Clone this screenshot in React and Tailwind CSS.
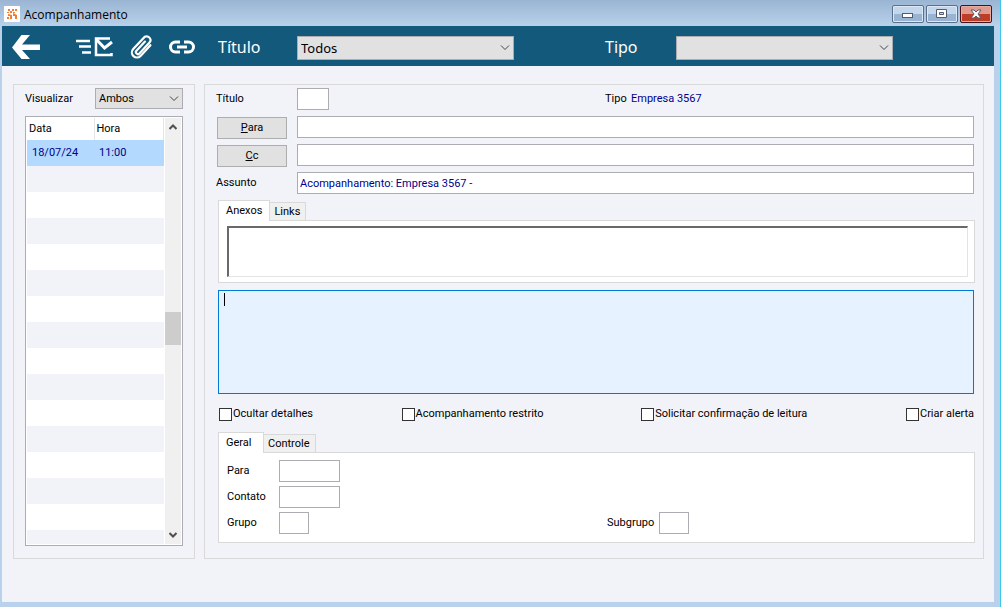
import { useState } from "react";

const fieldClass = "h-[22px] border border-[#abadb3] bg-white px-[2px] text-[#00008b] outline-none";

const BackIcon = () => (
  <svg width="28" height="24" viewBox="0 0 28 24" fill="#fff">
    <path d="M0 12.500 9.500 0H18l-8 9.500h18v5.500H10L18 24H9.500z" />
  </svg>
);

const SendIcon = () => (
  <svg width="38" height="20" viewBox="0 0 38 20" fill="none" stroke="#fff">
    <path d="M1 4h14M4 9.500h12M7 15.500h9" strokeWidth="2.500" />
    <path d="M35 1.500H21V18h15.500v-2" strokeWidth="2.500" />
    <path d="m21 2 8.500 9L37 5" strokeWidth="3" />
  </svg>
);

const ClipIcon = () => (
  <svg width="26" height="26" viewBox="-13 -13 26 26" fill="none" stroke="#fff" strokeWidth="2.200" strokeLinecap="round">
    <path transform="rotate(43)" d="M5-7V7.500a5 5 0 0 1-10 0V-9.500a4.200 4.200 0 0 1 6.500-1.500q1 1 1 3V6.500a2 2 0 0 1-4 0V-6" />
  </svg>
);

const LinkIcon = () => (
  <svg width="26" height="14" viewBox="0 0 26 14" fill="none" stroke="#fff" strokeWidth="3">
    <path d="M11 2H6.500a5 5 0 0 0 0 10H11M15 2h4.500a5 5 0 0 1 0 10H15M8 7h10" />
  </svg>
);

const Chevron = () => (
  <svg className="pointer-events-none absolute top-1/2 right-1 -translate-y-1/2" width="10" height="6" viewBox="0 0 10 6" fill="none" stroke="#444">
    <path d="m1 .500 4 4 4-4" />
  </svg>
);

const Select = ({ id, options, className }) => (
  <div className={`relative ${className}`}>
    <select
      id={id}
      className="h-full w-full appearance-none border border-[#abadb3] bg-[#e1e1e1] pl-[3px] text-black outline-none"
    >
      {options.map((o) => (
        <option key={o}>{o}</option>
      ))}
    </select>
    <Chevron />
  </div>
);

const Tabs = ({ tabs, active, onChange }) => (
  <div className="flex items-end">
    {tabs.map((t) => (
      <button
        key={t}
        type="button"
        onClick={() => onChange(t)}
        className={
          t === active
            ? "-mb-px h-[21px] min-w-[46px] border border-b-0 border-[#d9d9d9] bg-white px-[7px] text-left"
            : "h-[18px] border border-b-0 border-l-0 border-[#d9d9d9] bg-[#f0f0f0] pr-[5px] pl-1"
        }
      >
        {t}
      </button>
    ))}
  </div>
);

const Check = ({ label }) => (
  <label className="flex items-center gap-px whitespace-nowrap">
    <input type="checkbox" className="size-[13px] shrink-0 appearance-none border border-[#333] bg-white checked:bg-[#0078d7]" />
    {label}
  </label>
);

const TitleBar = () => (
  <header className="flex h-[26px] items-start bg-linear-to-b from-[#9ab5d3] to-[#b9d1ea] pr-2 pl-1">
    <svg className="mt-[6px]" width="16" height="16" viewBox="0 0 16 16">
      <rect width="16" height="16" rx="1" fill="#fff" />
      <path d="M4 3h2v2H4zM8 3h2v2H8zM11 3h2v2h-2zM3 6h2v1H3zM6 5h2v2H6zM9 6h2v1H9zM4 8l4 1v4H6v-3H4zM9 7l4 2v4h-2v-3H9zM3 11h2v2H3z" fill="#ef7d35" />
    </svg>
    <h1 className="mt-[7px] ml-1 font-['Open_Sans',sans-serif] text-[12px] leading-4">Acompanhamento</h1>
    <div className="mt-[5px] ml-auto flex gap-[2px]">
      <button type="button" aria-label="Minimizar" className="flex h-[18px] w-8 items-center justify-center rounded-[2px] border border-[#5b6f8d] bg-linear-to-b from-[#c3d7ec] from-50% to-[#98b4d2] to-50% shadow-[inset_0_0_0_1px_#dce8f5]">
        <svg className="mt-1" width="12" height="6"><rect x=".5" y=".5" width="10" height="4" fill="#fff" stroke="#555b6e" /></svg>
      </button>
      <button type="button" aria-label="Maximizar" className="flex h-[18px] w-8 items-center justify-center rounded-[2px] border border-[#5b6f8d] bg-linear-to-b from-[#c3d7ec] from-50% to-[#98b4d2] to-50% shadow-[inset_0_0_0_1px_#dce8f5]">
        <svg width="12" height="10"><path d="M.5.5h10v8H.5zM3.500 3.500v2h4v-2z" fill="#fff" fillRule="evenodd" stroke="#555b6e" /></svg>
      </button>
      <button type="button" aria-label="Fechar" className="flex h-[18px] w-8 items-center justify-center rounded-[2px] border border-[#43131c] bg-linear-to-b from-[#e09a90] from-50% to-[#bd3d27] to-50% shadow-[inset_0_0_0_1px_#e8aba0]">
        <svg width="12" height="10" viewBox="0 0 12 10"><path d="M1 1h3l2 2 2-2h3L8 5l3 4H8L6 7 4 9H1l3-4z" fill="#fff" stroke="#555b6e" /></svg>
      </button>
    </div>
  </header>
);

const Toolbar = () => (
  <div className="flex h-10 items-center bg-[#13597b] pt-[2px] pl-[10px] text-white">
    <button type="button" aria-label="Voltar"><BackIcon /></button>
    <button type="button" aria-label="Enviar" className="ml-[35px]"><SendIcon /></button>
    <button type="button" aria-label="Anexar" className="ml-4"><ClipIcon /></button>
    <button type="button" aria-label="Link" className="ml-[14px]"><LinkIcon /></button>
    <label htmlFor="filtro-titulo" className="ml-[23px] w-[79px] text-[16px]">Título</label>
    <Select id="filtro-titulo" options={["Todos"]} className="mt-[2px] h-6 w-[217px] text-[13px]" />
    <label htmlFor="filtro-tipo" className="ml-[91px] w-[71px] text-[16px]">Tipo</label>
    <Select id="filtro-tipo" options={[""]} className="mt-[2px] h-6 w-[217px] text-[13px]" />
  </div>
);

const rows = [{ data: "18/07/24", hora: "11:00" }, ...Array(15).fill({ data: "", hora: "" })];

const History = () => (
  <section className="flex w-[182px] flex-col border border-[#d9d9d9] px-[11px] pt-[3px] pb-3 font-[Roboto,sans-serif]">
    <div className="flex items-center justify-between">
      <label htmlFor="visualizar">Visualizar</label>
      <Select id="visualizar" options={["Ambos"]} className="h-[21px] w-[88px]" />
    </div>
    <div className="mt-[7px] flex h-[430px] border border-[#abadb3] bg-white p-px">
      <div className="flex-1 overflow-hidden">
        <table className="w-full table-fixed border-collapse">
          <thead>
            <tr className="h-[22px] text-left">
              <th className="w-[67px] border-r border-[#e5e5e5] pl-[2px] font-normal">Data</th>
              <th className="border-r border-[#e5e5e5] pl-[2px] font-normal">Hora</th>
            </tr>
          </thead>
          <tbody className="text-[#00008b]">
            {rows.map((r, i) => (
              <tr key={i} className={i === 0 ? "h-[26px] bg-[#b3d9ff]" : "h-[26px] odd:bg-white even:bg-[#f2f3f9]"}>
                <td className="pl-[5px]">{r.data}</td>
                <td className="pl-[5px]">{r.hora}</td>
              </tr>
            ))}
          </tbody>
        </table>
      </div>
      <div className="ml-px flex w-4 flex-col items-center bg-[#f0f0f0] py-[6px]">
        <svg width="8" height="6" viewBox="0 0 8 6" fill="none" stroke="#505050" strokeWidth="2"><path d="m.5 5 3.500-3.500L7.500 5" /></svg>
        <div className="mt-[182px] h-[33px] w-full bg-[#cdcdcd]" />
        <svg className="mt-auto" width="8" height="6" viewBox="0 0 8 6" fill="none" stroke="#505050" strokeWidth="2"><path d="M.5 1 4 4.500 7.500 1" /></svg>
      </div>
    </div>
  </section>
);

const Details = () => {
  const [assunto, setAssunto] = useState("Acompanhamento: Empresa 3567 -");
  const [mensagem, setMensagem] = useState("");
  const [tab, setTab] = useState("Anexos");
  const [tabInfo, setTabInfo] = useState("Geral");

  return (
    <section className="flex-1 border border-[#d9d9d9] pt-[3px] pr-[8px] pb-[15px] pl-[11px] font-[Roboto,sans-serif]">
      <div className="grid auto-rows-[22px] grid-cols-[81px_1fr] items-center gap-y-[6px] pr-px">
        <label htmlFor="titulo">Título</label>
        <div className="flex items-center">
          <input id="titulo" className={`${fieldClass} w-8`} />
          <label htmlFor="tipo" className="ml-[276px] w-[26px]">Tipo</label>
          <output id="tipo" className="text-[#00008b]">Empresa 3567</output>
        </div>
        <button type="button" className="mt-px ml-px h-[22px] w-[70px] self-start border border-[#adadad] bg-[#e1e1e1]">
          <span className="underline">P</span>ara
        </button>
        <input aria-label="Para" className={fieldClass} />
        <button type="button" className="mt-px ml-px h-[22px] w-[70px] self-start border border-[#adadad] bg-[#e1e1e1]">
          <span className="underline">C</span>c
        </button>
        <input aria-label="Cc" className={fieldClass} />
        <label htmlFor="assunto">Assunto</label>
        <input id="assunto" value={assunto} onChange={(e) => setAssunto(e.target.value)} className={fieldClass} />
      </div>

      <div className="mt-[6px] ml-[2px]">
        <Tabs tabs={["Anexos", "Links"]} active={tab} onChange={setTab} />
        <div className="h-[63px] border border-[#d9d9d9] bg-white py-[5px] pr-[6px] pl-2">
          <div className="h-[51px] border border-t-2 border-l-2 border-[#e3e3e3] border-t-[#696969] border-l-[#696969]" />
        </div>
      </div>

      <div className="relative mt-[7px] mr-px ml-[2px] flex">
        <textarea
          aria-label="Mensagem"
          value={mensagem}
          onChange={(e) => setMensagem(e.target.value)}
          className="h-[104px] flex-1 resize-none border border-[#0078d7] bg-[#e6f2ff] px-[5px] py-[2px] text-[#00008b] outline-none"
        />
        {!mensagem && <span className="pointer-events-none absolute top-[3px] left-[6px] h-[13px] w-px bg-black" />}
      </div>

      <div className="mt-3 ml-[3px] grid h-[13px] grid-cols-[182fr_239fr_264fr_69px] items-center">
        <Check label="Ocultar detalhes" />
        <Check label="Acompanhamento restrito" />
        <Check label="Solicitar confirmação de leitura" />
        <Check label="Criar alerta" />
      </div>

      <div className="mt-[13px] ml-[2px]">
        <Tabs tabs={["Geral", "Controle"]} active={tabInfo} onChange={setTabInfo} />
        <div className="grid grid-cols-[52px_328px_52px_1fr] items-center gap-y-1 border border-[#d9d9d9] bg-white px-2 pt-[7px] pb-2">
          <label htmlFor="para">Para</label>
          <input id="para" className={`${fieldClass} col-span-3 w-[61px]`} />
          <label htmlFor="contato">Contato</label>
          <input id="contato" className={`${fieldClass} col-span-3 w-[61px]`} />
          <label htmlFor="grupo">Grupo</label>
          <input id="grupo" className={`${fieldClass} w-[30px]`} />
          <label htmlFor="subgrupo">Subgrupo</label>
          <input id="subgrupo" className={`${fieldClass} w-[30px]`} />
        </div>
      </div>
    </section>
  );
};

export default function App() {
  return (
    <div className="flex min-h-screen flex-col border-r border-[#3cc8ee] bg-[#b9d1ea] font-['Noto_Sans',sans-serif] text-[11px] leading-4 text-black">
      <TitleBar />
      <div className="mr-[6px] mb-[5px] ml-[2px] flex flex-1 flex-col bg-[#f2f3f9]">
        <Toolbar />
        <main className="flex gap-[9px] pt-[18px] pr-[10px] pl-[11px]">
          <History />
          <Details />
        </main>
      </div>
    </div>
  );
}
